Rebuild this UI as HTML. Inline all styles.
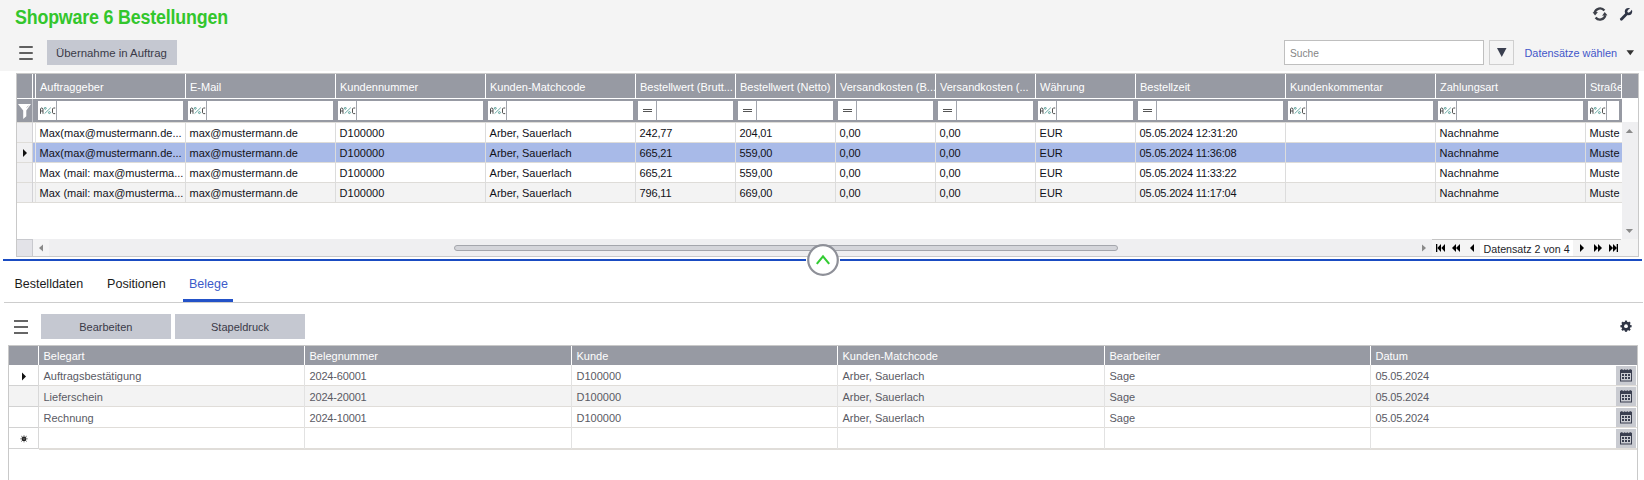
<!DOCTYPE html>
<html><head><meta charset="utf-8"><title>Shopware 6 Bestellungen</title>
<style>
html,body{margin:0;padding:0;}
body{width:1644px;height:480px;overflow:hidden;position:relative;background:#fff;font-family:"Liberation Sans",sans-serif;}
.r{position:absolute;}
.t{position:absolute;white-space:nowrap;}
.clip{position:absolute;overflow:hidden;}
</style></head><body>
<div class="r" style="left:0px;top:0px;width:1644px;height:71px;background:#f4f4f4;"></div>
<div class="t " style="left:14.5px;top:6.18px;font-size:19.4px;line-height:23px;color:#33c62c;font-weight:700;letter-spacing:-0.2px;transform:scaleX(0.92);transform-origin:0 0;">Shopware 6 Bestellungen</div>
<svg class="r" style="left:1590px;top:4px" width="20" height="20" viewBox="0 0 20 20">
<path d="M4.6 8.8 A5.6 5.6 0 0 1 14.4 6.5" fill="none" stroke="#3c3f48" stroke-width="2.3"/>
<path d="M2.6 8.3 L7.9 7.9 L5.1 11.4 Z" fill="#3c3f48"/>
<path d="M15.4 11.2 A5.6 5.6 0 0 1 5.6 13.5" fill="none" stroke="#3c3f48" stroke-width="2.3"/>
<path d="M12.1 11.7 L17.4 11.3 L14.7 8.0 Z" fill="#3c3f48"/>
</svg>
<svg class="r" style="left:1618px;top:6px" width="16" height="16" viewBox="0 0 16 16">
<path d="M3.4 13.2 L9.0 7.6" stroke="#2f3546" stroke-width="2.8" stroke-linecap="round"/>
<circle cx="10.5" cy="5.6" r="3.7" fill="#2f3546"/>
<path d="M10.6 5.4 L14.8 1.2" stroke="#f4f4f4" stroke-width="2.4" stroke-linecap="round"/>
<circle cx="11.2" cy="4.8" r="1.3" fill="#f4f4f4"/>
</svg>
<div class="r" style="left:19.4px;top:45.5px;width:14.1px;height:2.4px;background:#606060;border-radius:1px;"></div>
<div class="r" style="left:19.4px;top:51.5px;width:14.1px;height:2.4px;background:#606060;border-radius:1px;"></div>
<div class="r" style="left:19.4px;top:57.5px;width:14.1px;height:2.4px;background:#606060;border-radius:1px;"></div>
<div class="r" style="left:47px;top:40px;width:130px;height:25px;background:#c5c8d1;"></div>
<div class="t " style="left:56px;top:46.05px;font-size:11.4px;line-height:14px;color:#3a3a48;">Übernahme in Auftrag</div>
<div class="r" style="left:1284px;top:40px;width:200px;height:25px;background:#ffffff;box-sizing:border-box;border:1px solid #bfbfbf;"></div>
<div class="t " style="left:1290px;top:48.47px;font-size:10.2px;line-height:12px;color:#858585;">Suche</div>
<div class="r" style="left:1489px;top:40px;width:25px;height:25px;background:#f4f4f4;box-sizing:border-box;border:1px solid #cfcfcf;"></div>
<svg class="r" style="left:1497px;top:48px" width="10" height="10" viewBox="0 0 10 10"><path d="M0 0 H9.5 L4.75 9 Z" fill="#3a3f4f"/></svg>
<div class="t " style="left:1524.5px;top:47.22px;font-size:10.9px;line-height:13px;color:#4357c9;">Datensätze wählen</div>
<svg class="r" style="left:1626px;top:49.5px" width="9" height="6" viewBox="0 0 9 6"><path d="M0.5 0.3 H8 L4.25 5.3 Z" fill="#333"/></svg>
<div class="r" style="left:16px;top:73px;width:1623px;height:184px;background:#ffffff;box-sizing:border-box;border:1px solid #c9c9c9;"></div>
<div class="r" style="left:17px;top:74px;width:1621px;height:24px;background:#979aa3;"></div>
<div class="r" style="left:17px;top:98px;width:1605px;height:1px;background:#ffffff;"></div>
<div class="r" style="left:17px;top:99px;width:1605px;height:23px;background:#979aa3;"></div>
<div class="r" style="left:32px;top:74px;width:1px;height:24px;background:#ffffff;"></div>
<div class="r" style="left:35px;top:74px;width:1px;height:24px;background:#ffffff;"></div>
<div class="r" style="left:32px;top:99px;width:1px;height:23px;background:#c3c5ca;"></div>
<div class="r" style="left:1621px;top:74px;width:1px;height:24px;background:#ffffff;"></div>
<div class="r" style="left:1622px;top:99px;width:16px;height:23px;background:#ffffff;"></div>
<div class="r" style="left:185px;top:74px;width:1px;height:24px;background:#ffffff;"></div>
<div class="clip" style="left:36px;top:74px;width:149px;height:24px"><div class="t " style="left:4px;top:7.29px;font-size:11px;line-height:13px;color:#ffffff;">Auftraggeber</div></div>
<div class="r" style="left:38px;top:101px;width:145px;height:19px;background:#ffffff;"></div>
<div class="r" style="left:56px;top:101px;width:1px;height:19px;background:#a2a5ad;"></div>
<svg class="r" style="left:39px;top:107px" width="17" height="8" viewBox="0 0 17 8"><path d="M1.5 6.8 V2.0 L2.4 0.9 H3.1 L4.0 2.0 V6.8 M1.5 4.0 H4.0" fill="none" stroke="#484848" stroke-width="0.95"/><path d="M5.6 6.6 L11.8 0.6" stroke="#5aa39b" stroke-width="0.9"/><circle cx="6.3" cy="1.3" r="0.95" fill="none" stroke="#4b9a92" stroke-width="0.9"/><circle cx="10.4" cy="5.6" r="0.95" fill="none" stroke="#4b9a92" stroke-width="0.9"/><path d="M16.2 1.0 H14.3 L13.5 1.8 V5.8 L14.3 6.6 H16.2" fill="none" stroke="#484848" stroke-width="0.95"/></svg>
<div class="r" style="left:335px;top:74px;width:1px;height:24px;background:#ffffff;"></div>
<div class="clip" style="left:186px;top:74px;width:149px;height:24px"><div class="t " style="left:4px;top:7.29px;font-size:11px;line-height:13px;color:#ffffff;">E-Mail</div></div>
<div class="r" style="left:188px;top:101px;width:145px;height:19px;background:#ffffff;"></div>
<div class="r" style="left:206px;top:101px;width:1px;height:19px;background:#a2a5ad;"></div>
<svg class="r" style="left:189px;top:107px" width="17" height="8" viewBox="0 0 17 8"><path d="M1.5 6.8 V2.0 L2.4 0.9 H3.1 L4.0 2.0 V6.8 M1.5 4.0 H4.0" fill="none" stroke="#484848" stroke-width="0.95"/><path d="M5.6 6.6 L11.8 0.6" stroke="#5aa39b" stroke-width="0.9"/><circle cx="6.3" cy="1.3" r="0.95" fill="none" stroke="#4b9a92" stroke-width="0.9"/><circle cx="10.4" cy="5.6" r="0.95" fill="none" stroke="#4b9a92" stroke-width="0.9"/><path d="M16.2 1.0 H14.3 L13.5 1.8 V5.8 L14.3 6.6 H16.2" fill="none" stroke="#484848" stroke-width="0.95"/></svg>
<div class="r" style="left:485px;top:74px;width:1px;height:24px;background:#ffffff;"></div>
<div class="clip" style="left:336px;top:74px;width:149px;height:24px"><div class="t " style="left:4px;top:7.29px;font-size:11px;line-height:13px;color:#ffffff;">Kundennummer</div></div>
<div class="r" style="left:338px;top:101px;width:145px;height:19px;background:#ffffff;"></div>
<div class="r" style="left:356px;top:101px;width:1px;height:19px;background:#a2a5ad;"></div>
<svg class="r" style="left:339px;top:107px" width="17" height="8" viewBox="0 0 17 8"><path d="M1.5 6.8 V2.0 L2.4 0.9 H3.1 L4.0 2.0 V6.8 M1.5 4.0 H4.0" fill="none" stroke="#484848" stroke-width="0.95"/><path d="M5.6 6.6 L11.8 0.6" stroke="#5aa39b" stroke-width="0.9"/><circle cx="6.3" cy="1.3" r="0.95" fill="none" stroke="#4b9a92" stroke-width="0.9"/><circle cx="10.4" cy="5.6" r="0.95" fill="none" stroke="#4b9a92" stroke-width="0.9"/><path d="M16.2 1.0 H14.3 L13.5 1.8 V5.8 L14.3 6.6 H16.2" fill="none" stroke="#484848" stroke-width="0.95"/></svg>
<div class="r" style="left:635px;top:74px;width:1px;height:24px;background:#ffffff;"></div>
<div class="clip" style="left:486px;top:74px;width:149px;height:24px"><div class="t " style="left:4px;top:7.29px;font-size:11px;line-height:13px;color:#ffffff;">Kunden-Matchcode</div></div>
<div class="r" style="left:488px;top:101px;width:145px;height:19px;background:#ffffff;"></div>
<div class="r" style="left:506px;top:101px;width:1px;height:19px;background:#a2a5ad;"></div>
<svg class="r" style="left:489px;top:107px" width="17" height="8" viewBox="0 0 17 8"><path d="M1.5 6.8 V2.0 L2.4 0.9 H3.1 L4.0 2.0 V6.8 M1.5 4.0 H4.0" fill="none" stroke="#484848" stroke-width="0.95"/><path d="M5.6 6.6 L11.8 0.6" stroke="#5aa39b" stroke-width="0.9"/><circle cx="6.3" cy="1.3" r="0.95" fill="none" stroke="#4b9a92" stroke-width="0.9"/><circle cx="10.4" cy="5.6" r="0.95" fill="none" stroke="#4b9a92" stroke-width="0.9"/><path d="M16.2 1.0 H14.3 L13.5 1.8 V5.8 L14.3 6.6 H16.2" fill="none" stroke="#484848" stroke-width="0.95"/></svg>
<div class="r" style="left:735px;top:74px;width:1px;height:24px;background:#ffffff;"></div>
<div class="clip" style="left:636px;top:74px;width:99px;height:24px"><div class="t " style="left:4px;top:7.29px;font-size:11px;line-height:13px;color:#ffffff;">Bestellwert (Brutt...</div></div>
<div class="r" style="left:638px;top:101px;width:95px;height:19px;background:#ffffff;"></div>
<div class="r" style="left:656px;top:101px;width:1px;height:19px;background:#a2a5ad;"></div>
<div class="r" style="left:643px;top:109px;width:9px;height:1.2px;background:#555555;"></div>
<div class="r" style="left:643px;top:111.2px;width:9px;height:1.2px;background:#555555;"></div>
<div class="r" style="left:835px;top:74px;width:1px;height:24px;background:#ffffff;"></div>
<div class="clip" style="left:736px;top:74px;width:99px;height:24px"><div class="t " style="left:4px;top:7.29px;font-size:11px;line-height:13px;color:#ffffff;">Bestellwert (Netto)</div></div>
<div class="r" style="left:738px;top:101px;width:95px;height:19px;background:#ffffff;"></div>
<div class="r" style="left:756px;top:101px;width:1px;height:19px;background:#a2a5ad;"></div>
<div class="r" style="left:743px;top:109px;width:9px;height:1.2px;background:#555555;"></div>
<div class="r" style="left:743px;top:111.2px;width:9px;height:1.2px;background:#555555;"></div>
<div class="r" style="left:935px;top:74px;width:1px;height:24px;background:#ffffff;"></div>
<div class="clip" style="left:836px;top:74px;width:99px;height:24px"><div class="t " style="left:4px;top:7.29px;font-size:11px;line-height:13px;color:#ffffff;">Versandkosten (B...</div></div>
<div class="r" style="left:838px;top:101px;width:95px;height:19px;background:#ffffff;"></div>
<div class="r" style="left:856px;top:101px;width:1px;height:19px;background:#a2a5ad;"></div>
<div class="r" style="left:843px;top:109px;width:9px;height:1.2px;background:#555555;"></div>
<div class="r" style="left:843px;top:111.2px;width:9px;height:1.2px;background:#555555;"></div>
<div class="r" style="left:1035px;top:74px;width:1px;height:24px;background:#ffffff;"></div>
<div class="clip" style="left:936px;top:74px;width:99px;height:24px"><div class="t " style="left:4px;top:7.29px;font-size:11px;line-height:13px;color:#ffffff;">Versandkosten (...</div></div>
<div class="r" style="left:938px;top:101px;width:95px;height:19px;background:#ffffff;"></div>
<div class="r" style="left:956px;top:101px;width:1px;height:19px;background:#a2a5ad;"></div>
<div class="r" style="left:943px;top:109px;width:9px;height:1.2px;background:#555555;"></div>
<div class="r" style="left:943px;top:111.2px;width:9px;height:1.2px;background:#555555;"></div>
<div class="r" style="left:1135px;top:74px;width:1px;height:24px;background:#ffffff;"></div>
<div class="clip" style="left:1036px;top:74px;width:99px;height:24px"><div class="t " style="left:4px;top:7.29px;font-size:11px;line-height:13px;color:#ffffff;">Währung</div></div>
<div class="r" style="left:1038px;top:101px;width:95px;height:19px;background:#ffffff;"></div>
<div class="r" style="left:1056px;top:101px;width:1px;height:19px;background:#a2a5ad;"></div>
<svg class="r" style="left:1039px;top:107px" width="17" height="8" viewBox="0 0 17 8"><path d="M1.5 6.8 V2.0 L2.4 0.9 H3.1 L4.0 2.0 V6.8 M1.5 4.0 H4.0" fill="none" stroke="#484848" stroke-width="0.95"/><path d="M5.6 6.6 L11.8 0.6" stroke="#5aa39b" stroke-width="0.9"/><circle cx="6.3" cy="1.3" r="0.95" fill="none" stroke="#4b9a92" stroke-width="0.9"/><circle cx="10.4" cy="5.6" r="0.95" fill="none" stroke="#4b9a92" stroke-width="0.9"/><path d="M16.2 1.0 H14.3 L13.5 1.8 V5.8 L14.3 6.6 H16.2" fill="none" stroke="#484848" stroke-width="0.95"/></svg>
<div class="r" style="left:1285px;top:74px;width:1px;height:24px;background:#ffffff;"></div>
<div class="clip" style="left:1136px;top:74px;width:149px;height:24px"><div class="t " style="left:4px;top:7.29px;font-size:11px;line-height:13px;color:#ffffff;">Bestellzeit</div></div>
<div class="r" style="left:1138px;top:101px;width:145px;height:19px;background:#ffffff;"></div>
<div class="r" style="left:1156px;top:101px;width:1px;height:19px;background:#a2a5ad;"></div>
<div class="r" style="left:1143px;top:109px;width:9px;height:1.2px;background:#555555;"></div>
<div class="r" style="left:1143px;top:111.2px;width:9px;height:1.2px;background:#555555;"></div>
<div class="r" style="left:1435px;top:74px;width:1px;height:24px;background:#ffffff;"></div>
<div class="clip" style="left:1286px;top:74px;width:149px;height:24px"><div class="t " style="left:4px;top:7.29px;font-size:11px;line-height:13px;color:#ffffff;">Kundenkommentar</div></div>
<div class="r" style="left:1288px;top:101px;width:145px;height:19px;background:#ffffff;"></div>
<div class="r" style="left:1306px;top:101px;width:1px;height:19px;background:#a2a5ad;"></div>
<svg class="r" style="left:1289px;top:107px" width="17" height="8" viewBox="0 0 17 8"><path d="M1.5 6.8 V2.0 L2.4 0.9 H3.1 L4.0 2.0 V6.8 M1.5 4.0 H4.0" fill="none" stroke="#484848" stroke-width="0.95"/><path d="M5.6 6.6 L11.8 0.6" stroke="#5aa39b" stroke-width="0.9"/><circle cx="6.3" cy="1.3" r="0.95" fill="none" stroke="#4b9a92" stroke-width="0.9"/><circle cx="10.4" cy="5.6" r="0.95" fill="none" stroke="#4b9a92" stroke-width="0.9"/><path d="M16.2 1.0 H14.3 L13.5 1.8 V5.8 L14.3 6.6 H16.2" fill="none" stroke="#484848" stroke-width="0.95"/></svg>
<div class="r" style="left:1585px;top:74px;width:1px;height:24px;background:#ffffff;"></div>
<div class="clip" style="left:1436px;top:74px;width:149px;height:24px"><div class="t " style="left:4px;top:7.29px;font-size:11px;line-height:13px;color:#ffffff;">Zahlungsart</div></div>
<div class="r" style="left:1438px;top:101px;width:145px;height:19px;background:#ffffff;"></div>
<div class="r" style="left:1456px;top:101px;width:1px;height:19px;background:#a2a5ad;"></div>
<svg class="r" style="left:1439px;top:107px" width="17" height="8" viewBox="0 0 17 8"><path d="M1.5 6.8 V2.0 L2.4 0.9 H3.1 L4.0 2.0 V6.8 M1.5 4.0 H4.0" fill="none" stroke="#484848" stroke-width="0.95"/><path d="M5.6 6.6 L11.8 0.6" stroke="#5aa39b" stroke-width="0.9"/><circle cx="6.3" cy="1.3" r="0.95" fill="none" stroke="#4b9a92" stroke-width="0.9"/><circle cx="10.4" cy="5.6" r="0.95" fill="none" stroke="#4b9a92" stroke-width="0.9"/><path d="M16.2 1.0 H14.3 L13.5 1.8 V5.8 L14.3 6.6 H16.2" fill="none" stroke="#484848" stroke-width="0.95"/></svg>
<div class="clip" style="left:1586px;top:74px;width:35px;height:24px"><div class="t " style="left:4px;top:7.29px;font-size:11px;line-height:13px;color:#ffffff;">Straße</div></div>
<div class="r" style="left:1588px;top:101px;width:31px;height:19px;background:#ffffff;"></div>
<div class="r" style="left:1606px;top:101px;width:1px;height:19px;background:#a2a5ad;"></div>
<svg class="r" style="left:1589px;top:107px" width="17" height="8" viewBox="0 0 17 8"><path d="M1.5 6.8 V2.0 L2.4 0.9 H3.1 L4.0 2.0 V6.8 M1.5 4.0 H4.0" fill="none" stroke="#484848" stroke-width="0.95"/><path d="M5.6 6.6 L11.8 0.6" stroke="#5aa39b" stroke-width="0.9"/><circle cx="6.3" cy="1.3" r="0.95" fill="none" stroke="#4b9a92" stroke-width="0.9"/><circle cx="10.4" cy="5.6" r="0.95" fill="none" stroke="#4b9a92" stroke-width="0.9"/><path d="M16.2 1.0 H14.3 L13.5 1.8 V5.8 L14.3 6.6 H16.2" fill="none" stroke="#484848" stroke-width="0.95"/></svg>
<svg class="r" style="left:17px;top:103px" width="15" height="17" viewBox="0 0 15 17"><path d="M1 1 H14 L9.3 7.6 V13.2 L6.2 15.9 V7.6 Z" fill="#ffffff"/><path d="M9.6 4.6 L11.6 2.6" stroke="#a8aab0" stroke-width="0.8"/></svg>
<div class="r" style="left:17px;top:122px;width:15px;height:20px;background:#f0f0f2;"></div>
<div class="r" style="left:33px;top:122px;width:2px;height:20px;background:#ffffff;"></div>
<div class="r" style="left:36px;top:123px;width:1586px;height:19px;background:#ffffff;"></div>
<div class="r" style="left:17px;top:122px;width:1605px;height:1px;background:#dedcd8;"></div>
<div class="clip" style="left:36px;top:122px;width:149px;height:20px"><div class="t " style="left:3.6px;top:5.49px;font-size:11px;line-height:13px;color:#111118;">Max(max@mustermann.de...</div></div>
<div class="clip" style="left:186px;top:122px;width:149px;height:20px"><div class="t " style="left:3.6px;top:5.49px;font-size:11px;line-height:13px;color:#111118;">max@mustermann.de</div></div>
<div class="clip" style="left:336px;top:122px;width:149px;height:20px"><div class="t " style="left:3.6px;top:5.49px;font-size:11px;line-height:13px;color:#111118;">D100000</div></div>
<div class="clip" style="left:486px;top:122px;width:149px;height:20px"><div class="t " style="left:3.6px;top:5.49px;font-size:11px;line-height:13px;color:#111118;">Arber, Sauerlach</div></div>
<div class="clip" style="left:636px;top:122px;width:99px;height:20px"><div class="t " style="left:3.6px;top:5.49px;font-size:11px;line-height:13px;color:#111118;letter-spacing:-0.17px;">242,77</div></div>
<div class="clip" style="left:736px;top:122px;width:99px;height:20px"><div class="t " style="left:3.6px;top:5.49px;font-size:11px;line-height:13px;color:#111118;letter-spacing:-0.17px;">204,01</div></div>
<div class="clip" style="left:836px;top:122px;width:99px;height:20px"><div class="t " style="left:3.6px;top:5.49px;font-size:11px;line-height:13px;color:#111118;letter-spacing:-0.17px;">0,00</div></div>
<div class="clip" style="left:936px;top:122px;width:99px;height:20px"><div class="t " style="left:3.6px;top:5.49px;font-size:11px;line-height:13px;color:#111118;letter-spacing:-0.17px;">0,00</div></div>
<div class="clip" style="left:1036px;top:122px;width:99px;height:20px"><div class="t " style="left:3.6px;top:5.49px;font-size:11px;line-height:13px;color:#111118;">EUR</div></div>
<div class="clip" style="left:1136px;top:122px;width:149px;height:20px"><div class="t " style="left:3.6px;top:5.49px;font-size:11px;line-height:13px;color:#111118;letter-spacing:-0.17px;">05.05.2024 12:31:20</div></div>
<div class="clip" style="left:1436px;top:122px;width:149px;height:20px"><div class="t " style="left:3.6px;top:5.49px;font-size:11px;line-height:13px;color:#111118;">Nachnahme</div></div>
<div class="clip" style="left:1586px;top:122px;width:35px;height:20px"><div class="t " style="left:3.6px;top:5.49px;font-size:11px;line-height:13px;color:#111118;">Muste</div></div>
<div class="r" style="left:17px;top:142px;width:15px;height:20px;background:#f0f0f2;"></div>
<div class="r" style="left:33px;top:142px;width:2px;height:20px;background:#ffffff;"></div>
<div class="r" style="left:33px;top:143px;width:2px;height:19px;background:#a8bae8;"></div>
<div class="r" style="left:36px;top:143px;width:1586px;height:19px;background:#a8bae8;"></div>
<div class="r" style="left:17px;top:142px;width:1605px;height:1px;background:#dedcd8;"></div>
<div class="clip" style="left:36px;top:142px;width:149px;height:20px"><div class="t " style="left:3.6px;top:5.49px;font-size:11px;line-height:13px;color:#111118;">Max(max@mustermann.de...</div></div>
<div class="clip" style="left:186px;top:142px;width:149px;height:20px"><div class="t " style="left:3.6px;top:5.49px;font-size:11px;line-height:13px;color:#111118;">max@mustermann.de</div></div>
<div class="clip" style="left:336px;top:142px;width:149px;height:20px"><div class="t " style="left:3.6px;top:5.49px;font-size:11px;line-height:13px;color:#111118;">D100000</div></div>
<div class="clip" style="left:486px;top:142px;width:149px;height:20px"><div class="t " style="left:3.6px;top:5.49px;font-size:11px;line-height:13px;color:#111118;">Arber, Sauerlach</div></div>
<div class="clip" style="left:636px;top:142px;width:99px;height:20px"><div class="t " style="left:3.6px;top:5.49px;font-size:11px;line-height:13px;color:#111118;letter-spacing:-0.17px;">665,21</div></div>
<div class="clip" style="left:736px;top:142px;width:99px;height:20px"><div class="t " style="left:3.6px;top:5.49px;font-size:11px;line-height:13px;color:#111118;letter-spacing:-0.17px;">559,00</div></div>
<div class="clip" style="left:836px;top:142px;width:99px;height:20px"><div class="t " style="left:3.6px;top:5.49px;font-size:11px;line-height:13px;color:#111118;letter-spacing:-0.17px;">0,00</div></div>
<div class="clip" style="left:936px;top:142px;width:99px;height:20px"><div class="t " style="left:3.6px;top:5.49px;font-size:11px;line-height:13px;color:#111118;letter-spacing:-0.17px;">0,00</div></div>
<div class="clip" style="left:1036px;top:142px;width:99px;height:20px"><div class="t " style="left:3.6px;top:5.49px;font-size:11px;line-height:13px;color:#111118;">EUR</div></div>
<div class="clip" style="left:1136px;top:142px;width:149px;height:20px"><div class="t " style="left:3.6px;top:5.49px;font-size:11px;line-height:13px;color:#111118;letter-spacing:-0.17px;">05.05.2024 11:36:08</div></div>
<div class="clip" style="left:1436px;top:142px;width:149px;height:20px"><div class="t " style="left:3.6px;top:5.49px;font-size:11px;line-height:13px;color:#111118;">Nachnahme</div></div>
<div class="clip" style="left:1586px;top:142px;width:35px;height:20px"><div class="t " style="left:3.6px;top:5.49px;font-size:11px;line-height:13px;color:#111118;">Muste</div></div>
<div class="r" style="left:17px;top:162px;width:15px;height:20px;background:#f0f0f2;"></div>
<div class="r" style="left:33px;top:162px;width:2px;height:20px;background:#ffffff;"></div>
<div class="r" style="left:36px;top:163px;width:1586px;height:19px;background:#ffffff;"></div>
<div class="r" style="left:17px;top:162px;width:1605px;height:1px;background:#dedcd8;"></div>
<div class="clip" style="left:36px;top:162px;width:149px;height:20px"><div class="t " style="left:3.6px;top:5.49px;font-size:11px;line-height:13px;color:#111118;">Max (mail: max@musterma...</div></div>
<div class="clip" style="left:186px;top:162px;width:149px;height:20px"><div class="t " style="left:3.6px;top:5.49px;font-size:11px;line-height:13px;color:#111118;">max@mustermann.de</div></div>
<div class="clip" style="left:336px;top:162px;width:149px;height:20px"><div class="t " style="left:3.6px;top:5.49px;font-size:11px;line-height:13px;color:#111118;">D100000</div></div>
<div class="clip" style="left:486px;top:162px;width:149px;height:20px"><div class="t " style="left:3.6px;top:5.49px;font-size:11px;line-height:13px;color:#111118;">Arber, Sauerlach</div></div>
<div class="clip" style="left:636px;top:162px;width:99px;height:20px"><div class="t " style="left:3.6px;top:5.49px;font-size:11px;line-height:13px;color:#111118;letter-spacing:-0.17px;">665,21</div></div>
<div class="clip" style="left:736px;top:162px;width:99px;height:20px"><div class="t " style="left:3.6px;top:5.49px;font-size:11px;line-height:13px;color:#111118;letter-spacing:-0.17px;">559,00</div></div>
<div class="clip" style="left:836px;top:162px;width:99px;height:20px"><div class="t " style="left:3.6px;top:5.49px;font-size:11px;line-height:13px;color:#111118;letter-spacing:-0.17px;">0,00</div></div>
<div class="clip" style="left:936px;top:162px;width:99px;height:20px"><div class="t " style="left:3.6px;top:5.49px;font-size:11px;line-height:13px;color:#111118;letter-spacing:-0.17px;">0,00</div></div>
<div class="clip" style="left:1036px;top:162px;width:99px;height:20px"><div class="t " style="left:3.6px;top:5.49px;font-size:11px;line-height:13px;color:#111118;">EUR</div></div>
<div class="clip" style="left:1136px;top:162px;width:149px;height:20px"><div class="t " style="left:3.6px;top:5.49px;font-size:11px;line-height:13px;color:#111118;letter-spacing:-0.17px;">05.05.2024 11:33:22</div></div>
<div class="clip" style="left:1436px;top:162px;width:149px;height:20px"><div class="t " style="left:3.6px;top:5.49px;font-size:11px;line-height:13px;color:#111118;">Nachnahme</div></div>
<div class="clip" style="left:1586px;top:162px;width:35px;height:20px"><div class="t " style="left:3.6px;top:5.49px;font-size:11px;line-height:13px;color:#111118;">Muste</div></div>
<div class="r" style="left:17px;top:182px;width:15px;height:20px;background:#f0f0f2;"></div>
<div class="r" style="left:33px;top:182px;width:2px;height:20px;background:#f3f3f3;"></div>
<div class="r" style="left:36px;top:183px;width:1586px;height:19px;background:#f3f3f3;"></div>
<div class="r" style="left:17px;top:182px;width:1605px;height:1px;background:#dedcd8;"></div>
<div class="clip" style="left:36px;top:182px;width:149px;height:20px"><div class="t " style="left:3.6px;top:5.49px;font-size:11px;line-height:13px;color:#111118;">Max (mail: max@musterma...</div></div>
<div class="clip" style="left:186px;top:182px;width:149px;height:20px"><div class="t " style="left:3.6px;top:5.49px;font-size:11px;line-height:13px;color:#111118;">max@mustermann.de</div></div>
<div class="clip" style="left:336px;top:182px;width:149px;height:20px"><div class="t " style="left:3.6px;top:5.49px;font-size:11px;line-height:13px;color:#111118;">D100000</div></div>
<div class="clip" style="left:486px;top:182px;width:149px;height:20px"><div class="t " style="left:3.6px;top:5.49px;font-size:11px;line-height:13px;color:#111118;">Arber, Sauerlach</div></div>
<div class="clip" style="left:636px;top:182px;width:99px;height:20px"><div class="t " style="left:3.6px;top:5.49px;font-size:11px;line-height:13px;color:#111118;letter-spacing:-0.17px;">796,11</div></div>
<div class="clip" style="left:736px;top:182px;width:99px;height:20px"><div class="t " style="left:3.6px;top:5.49px;font-size:11px;line-height:13px;color:#111118;letter-spacing:-0.17px;">669,00</div></div>
<div class="clip" style="left:836px;top:182px;width:99px;height:20px"><div class="t " style="left:3.6px;top:5.49px;font-size:11px;line-height:13px;color:#111118;letter-spacing:-0.17px;">0,00</div></div>
<div class="clip" style="left:936px;top:182px;width:99px;height:20px"><div class="t " style="left:3.6px;top:5.49px;font-size:11px;line-height:13px;color:#111118;letter-spacing:-0.17px;">0,00</div></div>
<div class="clip" style="left:1036px;top:182px;width:99px;height:20px"><div class="t " style="left:3.6px;top:5.49px;font-size:11px;line-height:13px;color:#111118;">EUR</div></div>
<div class="clip" style="left:1136px;top:182px;width:149px;height:20px"><div class="t " style="left:3.6px;top:5.49px;font-size:11px;line-height:13px;color:#111118;letter-spacing:-0.17px;">05.05.2024 11:17:04</div></div>
<div class="clip" style="left:1436px;top:182px;width:149px;height:20px"><div class="t " style="left:3.6px;top:5.49px;font-size:11px;line-height:13px;color:#111118;">Nachnahme</div></div>
<div class="clip" style="left:1586px;top:182px;width:35px;height:20px"><div class="t " style="left:3.6px;top:5.49px;font-size:11px;line-height:13px;color:#111118;">Muste</div></div>
<div class="r" style="left:17px;top:202px;width:1605px;height:1px;background:#dedcd8;"></div>
<div class="r" style="left:32px;top:122px;width:1px;height:80px;background:#d2d2d6;"></div>
<div class="r" style="left:35px;top:122px;width:1px;height:80px;background:#e2e2e2;"></div>
<div class="r" style="left:185px;top:122px;width:1px;height:80px;background:#dcdcdc;"></div>
<div class="r" style="left:335px;top:122px;width:1px;height:80px;background:#dcdcdc;"></div>
<div class="r" style="left:485px;top:122px;width:1px;height:80px;background:#dcdcdc;"></div>
<div class="r" style="left:635px;top:122px;width:1px;height:80px;background:#dcdcdc;"></div>
<div class="r" style="left:735px;top:122px;width:1px;height:80px;background:#dcdcdc;"></div>
<div class="r" style="left:835px;top:122px;width:1px;height:80px;background:#dcdcdc;"></div>
<div class="r" style="left:935px;top:122px;width:1px;height:80px;background:#dcdcdc;"></div>
<div class="r" style="left:1035px;top:122px;width:1px;height:80px;background:#dcdcdc;"></div>
<div class="r" style="left:1135px;top:122px;width:1px;height:80px;background:#dcdcdc;"></div>
<div class="r" style="left:1285px;top:122px;width:1px;height:80px;background:#dcdcdc;"></div>
<div class="r" style="left:1435px;top:122px;width:1px;height:80px;background:#dcdcdc;"></div>
<div class="r" style="left:1585px;top:122px;width:1px;height:80px;background:#dcdcdc;"></div>
<svg class="r" style="left:22px;top:148px" width="6" height="10" viewBox="0 0 6 10"><path d="M1 1 L5 5 L1 9 Z" fill="#111"/></svg>
<div class="r" style="left:1622px;top:122px;width:16px;height:117px;background:#efeff1;"></div>
<svg class="r" style="left:1625px;top:128px" width="9" height="6" viewBox="0 0 9 6"><path d="M0.8 5 H8 L4.4 1 Z" fill="#8a8a8a"/></svg>
<svg class="r" style="left:1625px;top:228px" width="9" height="6" viewBox="0 0 9 6"><path d="M0.8 1 H8 L4.4 5 Z" fill="#8a8a8a"/></svg>
<div class="r" style="left:17px;top:239px;width:1415px;height:17px;background:#efeff1;"></div>
<div class="r" style="left:17px;top:239px;width:15px;height:17px;background:#e3e3e8;"></div>
<div class="r" style="left:32px;top:239px;width:1px;height:17px;background:#c8c9ce;"></div>
<div class="r" style="left:17px;top:239px;width:15px;height:1px;background:#c8c9ce;"></div>
<div class="r" style="left:33px;top:240px;width:16px;height:16px;background:#f4f4f5;"></div>
<svg class="r" style="left:38px;top:244px" width="6" height="8" viewBox="0 0 6 8"><path d="M5 0.5 V7.5 L1 4 Z" fill="#8a8a8a"/></svg>
<svg class="r" style="left:1421px;top:244px" width="6" height="8" viewBox="0 0 6 8"><path d="M1 0.5 V7.5 L5 4 Z" fill="#8a8a8a"/></svg>
<div class="r" style="left:454px;top:245px;width:664px;height:6px;background:#d4d5da;box-sizing:border-box;border:1px solid #a4a6ac;border-radius:3px;"></div>
<div class="r" style="left:1432px;top:239px;width:206px;height:17px;background:#f4f4f4;"></div>
<div class="r" style="left:1432px;top:239px;width:189px;height:1px;background:#c4c4c4;"></div>
<div class="r" style="left:1480px;top:240px;width:93px;height:16px;background:#ffffff;"></div>
<div class="t " style="left:1483.5px;top:242.59px;font-size:10.7px;line-height:13px;color:#1e1e2a;">Datensatz 2 von 4</div>
<svg class="r" style="left:1434px;top:243px" width="190" height="10" viewBox="0 0 190 10"><rect x="2" y="1" width="1.3" height="8" fill="#000"/><path d="M7 1 V9 L3.3 5 Z M11 1 V9 L7.3 5 Z" fill="#000"/><path d="M22 1 V9 L18 5 Z M26 1 V9 L22 5 Z" fill="#000"/><path d="M40 1 V9 L36 5 Z" fill="#000"/><path d="M146 1 V9 L150 5 Z" fill="#000"/><path d="M160 1 V9 L164 5 Z M164 1 V9 L168 5 Z" fill="#000"/><path d="M175 1 V9 L179 5 Z M179 1 V9 L183 5 Z" fill="#000"/><rect x="182.7" y="1" width="1.3" height="8" fill="#000"/></svg>
<div class="r" style="left:3px;top:259px;width:803px;height:2px;background:#1a4cc2;"></div>
<div class="r" style="left:840px;top:259px;width:802px;height:2px;background:#1a4cc2;"></div>
<svg class="r" style="left:806px;top:243px" width="34" height="34" viewBox="0 0 34 34"><circle cx="17" cy="17" r="14.8" fill="#fff" stroke="#8e9098" stroke-width="2.2"/><path d="M10.8 20.9 L17 13.3 L23.2 20.9" fill="none" stroke="#33cc33" stroke-width="2.1"/></svg>
<div class="t " style="left:14.4px;top:276.57px;font-size:12.5px;line-height:15px;color:#1b1b1b;">Bestelldaten</div>
<div class="t " style="left:107px;top:276.53px;font-size:12.6px;line-height:15px;color:#1b1b1b;">Positionen</div>
<div class="t " style="left:189px;top:276.57px;font-size:12.5px;line-height:15px;color:#3b5bc9;">Belege</div>
<div class="r" style="left:4px;top:302px;width:1639px;height:1px;background:#cdcdcd;"></div>
<div class="r" style="left:183px;top:299px;width:50px;height:3px;background:#2352c8;"></div>
<div class="r" style="left:13.5px;top:319.5px;width:14px;height:2.5px;background:#666666;"></div>
<div class="r" style="left:13.5px;top:325.5px;width:14px;height:2.5px;background:#666666;"></div>
<div class="r" style="left:13.5px;top:331.5px;width:14px;height:2.5px;background:#666666;"></div>
<div class="r" style="left:41px;top:314px;width:130px;height:25px;background:#c5c8d1;"></div>
<div class="t " style="left:79.2px;top:320.69px;font-size:11px;line-height:13px;color:#3a3a48;">Bearbeiten</div>
<div class="r" style="left:175px;top:314px;width:130px;height:25px;background:#c5c8d1;"></div>
<div class="t " style="left:211px;top:320.69px;font-size:11px;line-height:13px;color:#3a3a48;">Stapeldruck</div>
<svg class="r" style="left:1619px;top:319px" width="14" height="14" viewBox="0 0 14 14"><g fill="#2f3545"><circle cx="7" cy="7.2" r="4.5"/><rect x="5.9" y="1.6" width="2.2" height="3" transform="rotate(0 7 7.2)"/><rect x="5.9" y="1.6" width="2.2" height="3" transform="rotate(45 7 7.2)"/><rect x="5.9" y="1.6" width="2.2" height="3" transform="rotate(90 7 7.2)"/><rect x="5.9" y="1.6" width="2.2" height="3" transform="rotate(135 7 7.2)"/><rect x="5.9" y="1.6" width="2.2" height="3" transform="rotate(180 7 7.2)"/><rect x="5.9" y="1.6" width="2.2" height="3" transform="rotate(225 7 7.2)"/><rect x="5.9" y="1.6" width="2.2" height="3" transform="rotate(270 7 7.2)"/><rect x="5.9" y="1.6" width="2.2" height="3" transform="rotate(315 7 7.2)"/></g><circle cx="7" cy="7.2" r="1.9" fill="#fff"/></svg>
<div class="r" style="left:8px;top:345px;width:1630px;height:135px;background:#ffffff;box-sizing:border-box;border:1px solid #c9c9c9;border-bottom:none;"></div>
<div class="r" style="left:9px;top:346px;width:1628px;height:19px;background:#979aa3;"></div>
<div class="r" style="left:38px;top:346px;width:1px;height:19px;background:#ffffff;"></div>
<div class="r" style="left:304px;top:346px;width:1px;height:19px;background:#ffffff;"></div>
<div class="t " style="left:43.5px;top:350.49px;font-size:11px;line-height:13px;color:#ffffff;">Belegart</div>
<div class="r" style="left:571px;top:346px;width:1px;height:19px;background:#ffffff;"></div>
<div class="t " style="left:309.5px;top:350.49px;font-size:11px;line-height:13px;color:#ffffff;">Belegnummer</div>
<div class="r" style="left:837px;top:346px;width:1px;height:19px;background:#ffffff;"></div>
<div class="t " style="left:576.5px;top:350.49px;font-size:11px;line-height:13px;color:#ffffff;">Kunde</div>
<div class="r" style="left:1104px;top:346px;width:1px;height:19px;background:#ffffff;"></div>
<div class="t " style="left:842.5px;top:350.49px;font-size:11px;line-height:13px;color:#ffffff;">Kunden-Matchcode</div>
<div class="r" style="left:1370px;top:346px;width:1px;height:19px;background:#ffffff;"></div>
<div class="t " style="left:1109.5px;top:350.49px;font-size:11px;line-height:13px;color:#ffffff;">Bearbeiter</div>
<div class="t " style="left:1375.5px;top:350.49px;font-size:11px;line-height:13px;color:#ffffff;">Datum</div>
<div class="r" style="left:9px;top:365px;width:1628px;height:21px;background:#ffffff;"></div>
<div class="r" style="left:39px;top:385px;width:1598px;height:2px;background:#e0ddd9;"></div>
<div class="r" style="left:9px;top:385px;width:29px;height:1px;background:#d2d2d2;"></div>
<div class="t " style="left:43.5px;top:370.19px;font-size:11px;line-height:13px;color:#5a5a64;">Auftragsbestätigung</div>
<div class="t " style="left:309.5px;top:370.19px;font-size:11px;line-height:13px;color:#5a5a64;letter-spacing:-0.17px;">2024-60001</div>
<div class="t " style="left:576.5px;top:370.19px;font-size:11px;line-height:13px;color:#5a5a64;">D100000</div>
<div class="t " style="left:842.5px;top:370.19px;font-size:11px;line-height:13px;color:#5a5a64;">Arber, Sauerlach</div>
<div class="t " style="left:1109.5px;top:370.19px;font-size:11px;line-height:13px;color:#5a5a64;">Sage</div>
<div class="t " style="left:1375.5px;top:370.19px;font-size:11px;line-height:13px;color:#5a5a64;letter-spacing:-0.17px;">05.05.2024</div>
<div class="r" style="left:1616px;top:366px;width:20px;height:19px;background:#c9cbd1;"></div>
<svg class="r" style="left:1620px;top:369px" width="12" height="13" viewBox="0 0 12 13"><path d="M0 1 L2 0 L3.2 1.2 L4.4 0.2 L6 1 L7.6 0.2 L8.8 1.2 L10 0 L12 1 V12.5 H0 Z" fill="#3a3f50"/><rect x="1" y="4" width="10" height="7.5" fill="#c9cbd1"/><g fill="#3a3f50"><rect x="2" y="5" width="2" height="2"/><rect x="5" y="5" width="2" height="2"/><rect x="8" y="5" width="2" height="2"/><rect x="2" y="8" width="2" height="2"/><rect x="5" y="8" width="2" height="2"/><rect x="8" y="8" width="2" height="2"/></g></svg>
<div class="r" style="left:9px;top:386px;width:1628px;height:21px;background:#f3f3f3;"></div>
<div class="r" style="left:39px;top:406px;width:1598px;height:2px;background:#e0ddd9;"></div>
<div class="r" style="left:9px;top:406px;width:29px;height:1px;background:#d2d2d2;"></div>
<div class="t " style="left:43.5px;top:391.19px;font-size:11px;line-height:13px;color:#5a5a64;">Lieferschein</div>
<div class="t " style="left:309.5px;top:391.19px;font-size:11px;line-height:13px;color:#5a5a64;letter-spacing:-0.17px;">2024-20001</div>
<div class="t " style="left:576.5px;top:391.19px;font-size:11px;line-height:13px;color:#5a5a64;">D100000</div>
<div class="t " style="left:842.5px;top:391.19px;font-size:11px;line-height:13px;color:#5a5a64;">Arber, Sauerlach</div>
<div class="t " style="left:1109.5px;top:391.19px;font-size:11px;line-height:13px;color:#5a5a64;">Sage</div>
<div class="t " style="left:1375.5px;top:391.19px;font-size:11px;line-height:13px;color:#5a5a64;letter-spacing:-0.17px;">05.05.2024</div>
<div class="r" style="left:1616px;top:387px;width:20px;height:19px;background:#c9cbd1;"></div>
<svg class="r" style="left:1620px;top:390px" width="12" height="13" viewBox="0 0 12 13"><path d="M0 1 L2 0 L3.2 1.2 L4.4 0.2 L6 1 L7.6 0.2 L8.8 1.2 L10 0 L12 1 V12.5 H0 Z" fill="#3a3f50"/><rect x="1" y="4" width="10" height="7.5" fill="#c9cbd1"/><g fill="#3a3f50"><rect x="2" y="5" width="2" height="2"/><rect x="5" y="5" width="2" height="2"/><rect x="8" y="5" width="2" height="2"/><rect x="2" y="8" width="2" height="2"/><rect x="5" y="8" width="2" height="2"/><rect x="8" y="8" width="2" height="2"/></g></svg>
<div class="r" style="left:9px;top:407px;width:1628px;height:21px;background:#ffffff;"></div>
<div class="r" style="left:39px;top:427px;width:1598px;height:2px;background:#e0ddd9;"></div>
<div class="r" style="left:9px;top:427px;width:29px;height:1px;background:#d2d2d2;"></div>
<div class="t " style="left:43.5px;top:412.19px;font-size:11px;line-height:13px;color:#5a5a64;">Rechnung</div>
<div class="t " style="left:309.5px;top:412.19px;font-size:11px;line-height:13px;color:#5a5a64;letter-spacing:-0.17px;">2024-10001</div>
<div class="t " style="left:576.5px;top:412.19px;font-size:11px;line-height:13px;color:#5a5a64;">D100000</div>
<div class="t " style="left:842.5px;top:412.19px;font-size:11px;line-height:13px;color:#5a5a64;">Arber, Sauerlach</div>
<div class="t " style="left:1109.5px;top:412.19px;font-size:11px;line-height:13px;color:#5a5a64;">Sage</div>
<div class="t " style="left:1375.5px;top:412.19px;font-size:11px;line-height:13px;color:#5a5a64;letter-spacing:-0.17px;">05.05.2024</div>
<div class="r" style="left:1616px;top:408px;width:20px;height:19px;background:#c9cbd1;"></div>
<svg class="r" style="left:1620px;top:411px" width="12" height="13" viewBox="0 0 12 13"><path d="M0 1 L2 0 L3.2 1.2 L4.4 0.2 L6 1 L7.6 0.2 L8.8 1.2 L10 0 L12 1 V12.5 H0 Z" fill="#3a3f50"/><rect x="1" y="4" width="10" height="7.5" fill="#c9cbd1"/><g fill="#3a3f50"><rect x="2" y="5" width="2" height="2"/><rect x="5" y="5" width="2" height="2"/><rect x="8" y="5" width="2" height="2"/><rect x="2" y="8" width="2" height="2"/><rect x="5" y="8" width="2" height="2"/><rect x="8" y="8" width="2" height="2"/></g></svg>
<div class="r" style="left:9px;top:428px;width:1628px;height:21px;background:#ffffff;"></div>
<div class="r" style="left:39px;top:448px;width:1598px;height:2px;background:#e0ddd9;"></div>
<div class="r" style="left:9px;top:448px;width:29px;height:1px;background:#d2d2d2;"></div>
<div class="r" style="left:1616px;top:429px;width:20px;height:19px;background:#c9cbd1;"></div>
<svg class="r" style="left:1620px;top:432px" width="12" height="13" viewBox="0 0 12 13"><path d="M0 1 L2 0 L3.2 1.2 L4.4 0.2 L6 1 L7.6 0.2 L8.8 1.2 L10 0 L12 1 V12.5 H0 Z" fill="#3a3f50"/><rect x="1" y="4" width="10" height="7.5" fill="#c9cbd1"/><g fill="#3a3f50"><rect x="2" y="5" width="2" height="2"/><rect x="5" y="5" width="2" height="2"/><rect x="8" y="5" width="2" height="2"/><rect x="2" y="8" width="2" height="2"/><rect x="5" y="8" width="2" height="2"/><rect x="8" y="8" width="2" height="2"/></g></svg>
<div class="r" style="left:38px;top:365px;width:1px;height:84px;background:#d8d8d8;"></div>
<div class="r" style="left:304px;top:365px;width:1px;height:84px;background:#e2e2e2;"></div>
<div class="r" style="left:571px;top:365px;width:1px;height:84px;background:#e2e2e2;"></div>
<div class="r" style="left:837px;top:365px;width:1px;height:84px;background:#e2e2e2;"></div>
<div class="r" style="left:1104px;top:365px;width:1px;height:84px;background:#e2e2e2;"></div>
<div class="r" style="left:1370px;top:365px;width:1px;height:84px;background:#e2e2e2;"></div>
<svg class="r" style="left:21px;top:372px" width="6" height="9" viewBox="0 0 6 9"><path d="M1 0.5 L5 4.5 L1 8.5 Z" fill="#111"/></svg>
<svg class="r" style="left:19px;top:434px" width="10" height="10" viewBox="0 0 10 10"><rect x="2.9" y="2.7" width="4.2" height="4.2" rx="0.8" fill="#000"/><g stroke="#555" stroke-width="0.8"><path d="M5 1.2 V8.4 M1.3 4.8 H8.7 M2.2 2 L7.8 7.6 M2.2 7.6 L7.8 2"/></g></svg>
</body></html>
